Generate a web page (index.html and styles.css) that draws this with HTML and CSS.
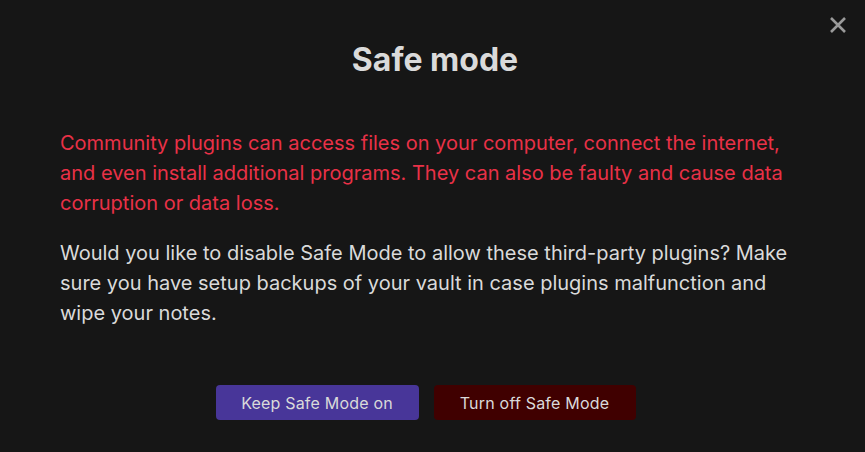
FILE: index.html
```html
<!DOCTYPE html>
<html>
<head>
<meta charset="utf-8">
<link rel="stylesheet" href="styles.css">
</head>
<body>
<div class="modal">
  <button class="close" aria-label="Close">
    <svg width="18" height="18" viewBox="0 0 18 18"><path d="M2 2L16 16M16 2L2 16" stroke="#9a9a9a" stroke-width="2.6" stroke-linecap="butt"/></svg>
  </button>
  <h1 class="title">Safe mode</h1>
  <div class="content">
    <p class="warn">Community plugins can access files on your computer, connect the internet, and even install additional programs. They can also be faulty and cause data corruption or data loss.</p>
    <p class="info">Would you like to disable Safe Mode to allow these third-party plugins? Make sure you have setup backups of your vault in case plugins malfunction and wipe your notes.</p>
  </div>
  <div class="buttons">
    <button class="btn btn-keep">Keep Safe Mode on</button>
    <button class="btn btn-off">Turn off Safe Mode</button>
  </div>
</div>
</body>
</html>
```
FILE: styles.css
```css
html, body {
  margin: 0;
  padding: 0;
  background: #161616;
  height: 100%;
}
body {
  font-family: Inter, "Noto Sans", sans-serif;
  color: #dadada;
}
.modal {
  position: relative;
  padding: 38px 0 0 60px;
}
.close {
  position: absolute;
  top: 16px;
  right: 18px;
  background: none;
  border: 0;
  padding: 0;
  width: 18px;
  height: 18px;
  cursor: pointer;
}
.close svg { display: block; }
.title {
  margin: 0 55px 0 0;
  text-align: center;
  font-size: 32px;
  font-weight: 700;
  line-height: 44px;
  color: #dadada;
}
.content {
  margin-top: 46px;
  padding-right: 55px;
}
.content p {
  margin: 0;
  font-size: 20px;
  line-height: 30px;
}
.warn {
  color: #e93147;
}
.info {
  margin-top: 20px !important;
  color: #dadada;
}
.buttons {
  display: flex;
  justify-content: center;
  gap: 15px;
  margin-top: 57px;
  padding-right: 74px;
}
.btn {
  font-family: Inter, "Noto Sans", sans-serif;
  font-size: 16px;
  letter-spacing: 0.2px;
  height: 35px;
  border: 0;
  border-radius: 4px;
  color: #dadada;
  cursor: pointer;
}
.btn-keep {
  width: 203px;
  background: #483699;
}
.btn-off {
  width: 202px;
  background: #400000;
}
```
